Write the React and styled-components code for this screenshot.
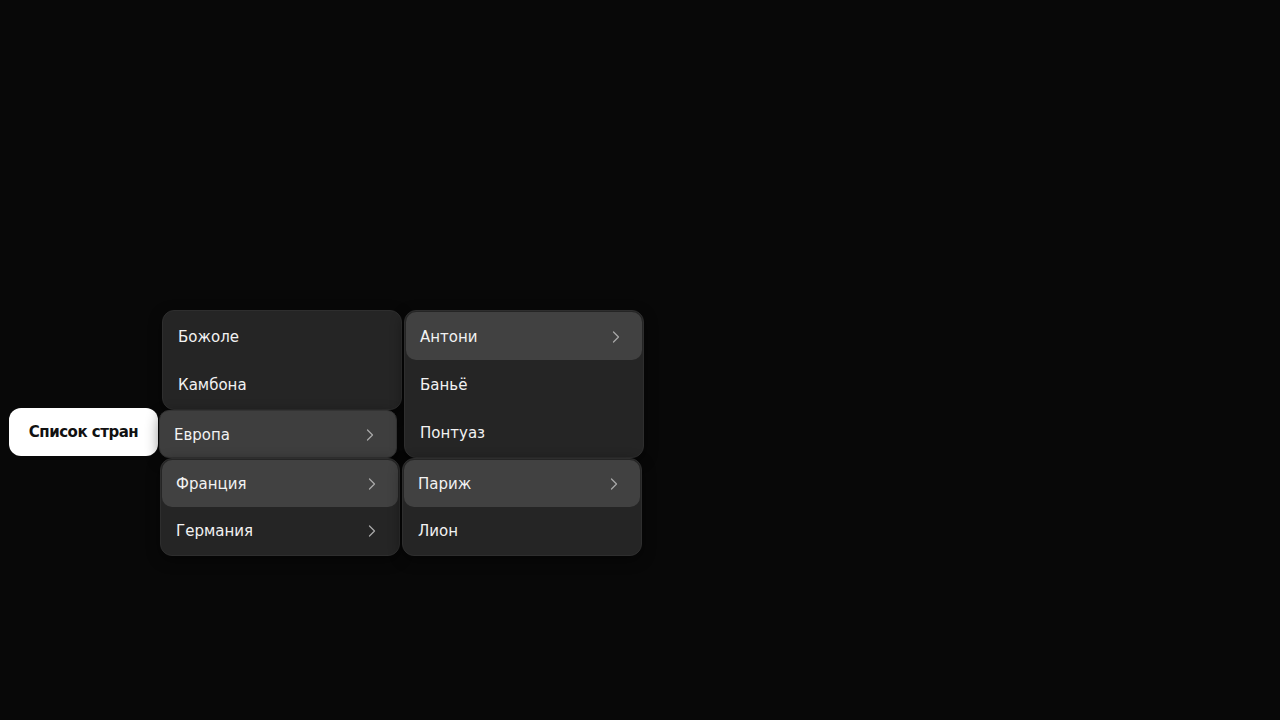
import React from 'react';
import styled, { createGlobalStyle } from 'styled-components';
import { ChevronRight } from 'lucide-react';

const GlobalStyle = createGlobalStyle`
  html, body {
    margin: 0;
    height: 100%;
    background: #080808;
  }

  body {
    font-family: "DejaVu Sans", "Noto Sans", sans-serif;
    color: #f2f2f2;
  }

  #root {
    height: 100%;
  }
`;

const Stage = styled.main`
  height: 720px;
  display: flex;
  align-items: center;
  padding: 146px 0 0 9px;
  box-sizing: border-box;
`;

const Trigger = styled.button`
  width: 149px;
  height: 48px;
  margin-top: -2px;
  border: none;
  border-radius: 12px;
  background: #ffffff;
  color: #111;
  font-family: inherit;
  font-size: 15px;
  font-weight: 600;
  letter-spacing: -0.5px;
  cursor: pointer;
`;

const Column = styled.div`
  display: flex;
  flex-direction: column;
  margin-left: ${(p) => p.$offset || 0}px;
`;

const Panel = styled.div`
  display: flex;
  flex-direction: column;
  width: 240px;
  box-sizing: border-box;
  padding: 1px;
  margin-left: ${(p) => p.$shift || 0}px;
  background: #252525;
  border: 1px solid #2e2e2e;
  border-radius: 12px;
  box-shadow: 0 4px 14px rgba(0, 0, 0, 0.45);
`;

const Item = styled.div`
  display: flex;
  align-items: center;
  justify-content: space-between;
  height: ${(p) => p.$h || 48}px;
  padding: ${(p) => p.$top || 0}px 16px 0 14px;
  box-sizing: border-box;
  border-radius: 10px;
  font-size: 15px;
  background: ${(p) => (p.$active ? '#414141' : 'transparent')};

  svg {
    color: #a8a8a8;
  }
`;

const SoloItem = styled(Item)`
  width: 238px;
  margin-left: ${(p) => p.$shift || 0}px;
  background: #3e3e3e;
  border: 1px solid #333;
  border-radius: 10px;
  box-shadow: 0 4px 14px rgba(0, 0, 0, 0.45);
`;

const Chevron = () => <ChevronRight size={20} strokeWidth={1.5} />;

export default function App() {
  return (
    <>
      <GlobalStyle />
      <Stage>
        <Trigger>Список стран</Trigger>
        <Column $offset={1}>
          <Panel $shift={3}>
            <Item $top={2}>Божоле</Item>
            <Item $top={2}>Камбона</Item>
          </Panel>
          <SoloItem $top={2}>
            Европа <Chevron />
          </SoloItem>
          <Panel $shift={1}>
            <Item $active $h={47}>
              Франция <Chevron />
            </Item>
            <Item $h={47}>
              Германия <Chevron />
            </Item>
          </Panel>
        </Column>
        <Column>
          <Panel $shift={2}>
            <Item $active $top={2}>
              Антони <Chevron />
            </Item>
            <Item $top={2}>Баньё</Item>
            <Item $top={2}>Понтуаз</Item>
          </Panel>
          <Panel>
            <Item $active $h={47}>
              Париж <Chevron />
            </Item>
            <Item $h={47}>Лион</Item>
          </Panel>
        </Column>
      </Stage>
    </>
  );
}
